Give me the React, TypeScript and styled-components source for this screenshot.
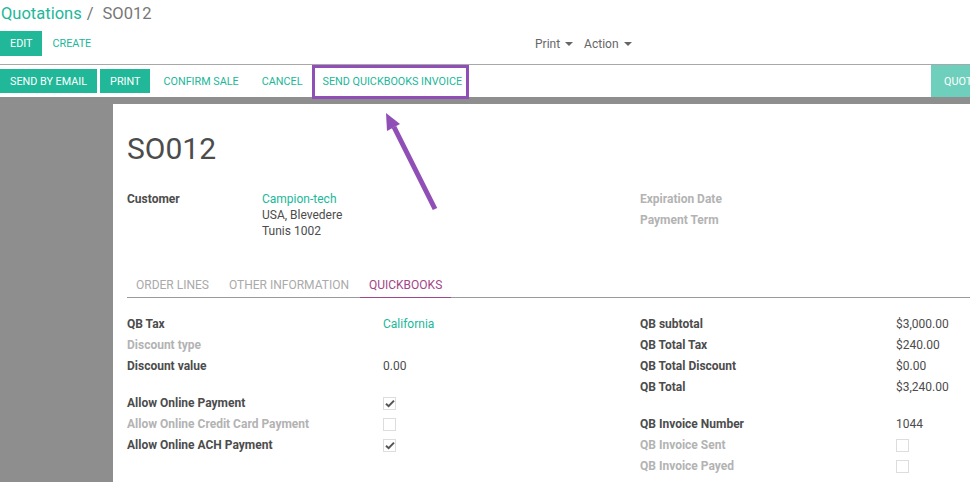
import React from "react";
import styled, { createGlobalStyle } from "styled-components";

const teal = "#21b799";
const purple = "#8f4fb6";
const tabPurple = "#a24689";
const dark = "#4c4c4c";
const muted = "#b3b3b3";

const GlobalStyle = createGlobalStyle`
  html, body {
    margin: 0;
    padding: 0;
    background: #fff;
    overflow: hidden;
  }
  body {
    font-family: Roboto, "Liberation Sans", sans-serif;
    font-size: 12px;
    color: ${dark};
  }
`;

const Page = styled.div`
  position: relative;
  width: 970px;
  height: 482px;
  overflow: hidden;
`;

const ControlPanel = styled.div`
  padding: 0 0 8px 0;
  border-bottom: 1px solid #a8a8a8;
`;

const Breadcrumb = styled.div`
  height: 28px;
  line-height: 28px;
  font-size: 16.5px;
  padding-left: 1px;
  color: #777;

  .link {
    color: ${teal};
  }
  .sep {
    margin: 0 9px 0 5px;
  }
`;

const ButtonRow = styled.div`
  display: grid;
  grid-template-columns: 485px 1fr;
  margin-top: 3px;
`;

const ButtonGroup = styled.div`
  display: flex;
  align-items: center;
`;

const Btn = styled.button<{ $primary?: boolean; $light?: boolean }>`
  font-family: inherit;
  font-size: 10.8px;
  text-transform: uppercase;
  border: none;
  border-radius: 0;
  height: 25px;
  padding: 0 10px;
  cursor: pointer;
  white-space: nowrap;
  background: ${(p) => (p.$primary ? teal : p.$light ? "#6ecfbc" : "transparent")};
  color: ${(p) => (p.$primary || p.$light ? "#fff" : teal)};
`;

const Sidebar = styled.div`
  display: flex;
  align-items: center;
  gap: 11px;
  padding-left: 50px;
  font-size: 12px;
  color: #666;
`;

const Dropdown = styled.span`
  display: inline-flex;
  align-items: center;
  gap: 5px;

  &::after {
    content: "";
    border-left: 4px solid transparent;
    border-right: 4px solid transparent;
    border-top: 4px solid #666;
  }
`;

const StatusBar = styled.div`
  display: flex;
  align-items: center;
  height: 32px;
`;

const StatusButtons = styled.div`
  display: flex;
  align-items: center;
  gap: 3px;
  flex: 1;

  ${Btn} {
    height: 24px;
  }
`;

const Highlight = styled.div`
  position: relative;
  padding: 0 7px 0 10px;
  height: 24px;
  display: flex;
  align-items: center;
  margin-left: -3px;

  &::before {
    content: "";
    position: absolute;
    left: 0;
    right: 0;
    top: -4px;
    bottom: -6px;
    border: 3px solid ${purple};
  }

  ${Btn} {
    padding: 0;
  }
`;

const RightBtn = styled(Btn)`
  height: 32px;
  width: 39px;
  padding: 0 0 0 13px;
  text-align: left;
  overflow: hidden;
`;

const Main = styled.div`
  background: #8e8e8e;
  padding: 7px 0 0 113px;
  height: 400px;
`;

const Sheet = styled.div`
  background: #fff;
  width: 1000px;
  height: 100%;
  padding: 7px 14px 0 14px;
  box-sizing: border-box;
`;

const Title = styled.h1`
  margin: 0;
  font-size: 30px;
  font-weight: 400;
  line-height: 42px;
  color: ${dark};
  padding-top: 17px;
`;

const Groups = styled.div`
  display: grid;
  grid-template-columns: 513px 1fr;
  margin-top: 18px;
`;

const Group = styled.div<{ $label: number }>`
  display: grid;
  grid-template-columns: ${(p) => p.$label}px 1fr;
  align-content: start;
`;

const Label = styled.div<{ $muted?: boolean }>`
  font-weight: 700;
  line-height: 16px;
  padding: 2.5px 0;
  color: ${(p) => (p.$muted ? muted : dark)};
`;

const Value = styled.div<{ $link?: boolean }>`
  line-height: 16px;
  padding: 2.5px 0;
  min-height: 16px;
  color: ${(p) => (p.$link ? teal : dark)};
`;

const AddressLine = styled.div<{ $link?: boolean }>`
  color: ${(p) => (p.$link ? teal : dark)};
`;

const Spacer = styled.div`
  grid-column: 1 / -1;
  height: 16px;
`;

const Tabs = styled.div`
  display: flex;
  margin-top: 27px;
  border-bottom: 1px solid #9a9a9a;
`;

const Tab = styled.div<{ $active?: boolean }>`
  padding: 9px 9px 4px;
  margin-right: 2px;
  line-height: 16px;
  text-transform: uppercase;
  color: ${(p) => (p.$active ? tabPurple : "#aaa")};
  border-bottom: 1px solid ${(p) => (p.$active ? tabPurple : "transparent")};
  margin-bottom: -1px;
`;

const TabContent = styled(Groups)`
  margin-top: 15px;
`;

const CheckBox = styled.span`
  display: inline-flex;
  align-items: center;
  justify-content: center;
  width: 11px;
  height: 11px;
  border: 1px solid #ddd;
  vertical-align: middle;
`;

const Arrow = styled.svg`
  position: absolute;
  left: 0;
  top: 0;
  pointer-events: none;
`;

function Check({ checked }: { checked?: boolean }) {
  return (
    <CheckBox>
      {checked && (
        <svg width="10" height="9" viewBox="0 0 10 9">
          <path d="M1 4.8 L3.6 7.2 L9 1.6" stroke="#555" strokeWidth="2" fill="none" />
        </svg>
      )}
    </CheckBox>
  );
}

const left = [
  { label: "QB Tax", value: "California", link: true },
  { label: "Discount type", value: "", muted: true },
  { label: "Discount value", value: "0.00" },
];

const right = [
  { label: "QB subtotal", value: "$3,000.00" },
  { label: "QB Total Tax", value: "$240.00" },
  { label: "QB Total Discount", value: "$0.00" },
  { label: "QB Total", value: "$3,240.00" },
];

export default function App() {
  return (
    <>
      <GlobalStyle />
      <Page>
        <ControlPanel>
          <Breadcrumb>
            <span className="link">Quotations</span>
            <span className="sep">/</span>
            <span>SO012</span>
          </Breadcrumb>
          <ButtonRow>
            <ButtonGroup>
              <Btn $primary>Edit</Btn>
              <Btn>Create</Btn>
            </ButtonGroup>
            <Sidebar>
              <Dropdown>Print</Dropdown>
              <Dropdown>Action</Dropdown>
            </Sidebar>
          </ButtonRow>
        </ControlPanel>

        <StatusBar>
          <StatusButtons>
            <Btn $primary>Send by Email</Btn>
            <Btn $primary>Print</Btn>
            <Btn>Confirm Sale</Btn>
            <Btn>Cancel</Btn>
            <Highlight>
              <Btn>Send QuickBooks Invoice</Btn>
            </Highlight>
          </StatusButtons>
          <RightBtn $light>Quotation</RightBtn>
        </StatusBar>

        <Main>
          <Sheet>
            <Title>SO012</Title>
            <Groups>
              <Group $label={135}>
                <Label>Customer</Label>
                <Value>
                  <AddressLine $link>Campion-tech</AddressLine>
                  <AddressLine>USA, Blevedere</AddressLine>
                  <AddressLine>Tunis 1002</AddressLine>
                </Value>
              </Group>
              <Group $label={256}>
                <Label $muted>Expiration Date</Label>
                <Value />
                <Label $muted>Payment Term</Label>
                <Value />
              </Group>
            </Groups>

            <Tabs>
              <Tab>Order Lines</Tab>
              <Tab>Other Information</Tab>
              <Tab $active>QuickBooks</Tab>
            </Tabs>

            <TabContent>
              <Group $label={256}>
                {left.map((r) => (
                  <React.Fragment key={r.label}>
                    <Label $muted={r.muted}>{r.label}</Label>
                    <Value $link={r.link}>{r.value}</Value>
                  </React.Fragment>
                ))}
                <Spacer />
                <Label>Allow Online Payment</Label>
                <Value><Check checked /></Value>
                <Label $muted>Allow Online Credit Card Payment</Label>
                <Value><Check /></Value>
                <Label>Allow Online ACH Payment</Label>
                <Value><Check checked /></Value>
              </Group>
              <Group $label={256}>
                {right.map((r) => (
                  <React.Fragment key={r.label}>
                    <Label>{r.label}</Label>
                    <Value>{r.value}</Value>
                  </React.Fragment>
                ))}
                <Spacer />
                <Label>QB Invoice Number</Label>
                <Value>1044</Value>
                <Label $muted>QB Invoice Sent</Label>
                <Value><Check /></Value>
                <Label $muted>QB Invoice Payed</Label>
                <Value><Check /></Value>
              </Group>
            </TabContent>
          </Sheet>
        </Main>

        <Arrow width="970" height="482" viewBox="0 0 970 482">
          <line x1="435" y1="209" x2="394" y2="127" stroke={purple} strokeWidth="5" />
          <polygon points="386,113 400,124 387,131" fill={purple} />
        </Arrow>
      </Page>
    </>
  );
}
